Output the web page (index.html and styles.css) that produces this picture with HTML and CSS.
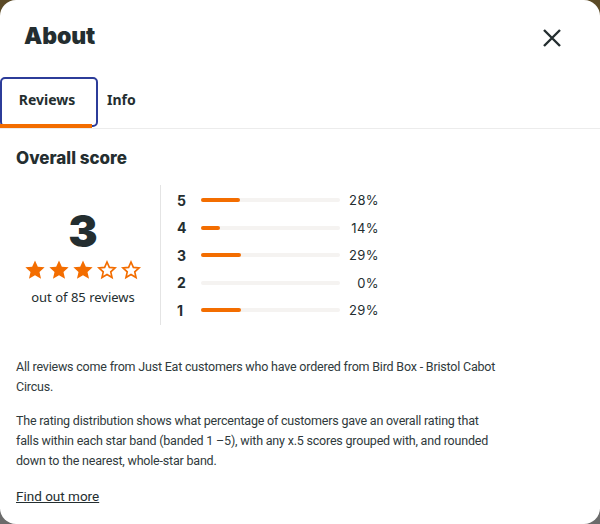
FILE: index.html
```html
<!DOCTYPE html>
<html lang="en">
<head>
<meta charset="utf-8">
<title>About</title>
<link rel="stylesheet" href="styles.css">
</head>
<body>
<div class="modal">
  <header class="head">
    <h1 class="title">About</h1>
    <button class="close" aria-label="Close">
      <svg width="20" height="20" viewBox="0 0 20 20"><path d="M2 2 L18 18 M18 2 L2 18" stroke="#242e30" stroke-width="2.4" stroke-linecap="butt" fill="none"/></svg>
    </button>
  </header>
  <nav class="tabs">
    <button class="tab active">Reviews</button>
    <button class="tab">Info</button>
  </nav>
  <section class="content">
    <h2 class="section-title">Overall score</h2>
    <div class="score">
      <div class="summary">
        <div class="big">3</div>
        <div class="stars">
          <svg class="star" viewBox="0 0 24 24"><path d="M12 1.5l3.1 6.9 7.4.7-5.6 5 1.7 7.4L12 17.6l-6.6 3.9 1.7-7.4-5.6-5 7.4-.7z" fill="#f36d00"/></svg>
          <svg class="star" viewBox="0 0 24 24"><path d="M12 1.5l3.1 6.9 7.4.7-5.6 5 1.7 7.4L12 17.6l-6.6 3.9 1.7-7.4-5.6-5 7.4-.7z" fill="#f36d00"/></svg>
          <svg class="star" viewBox="0 0 24 24"><path d="M12 1.5l3.1 6.9 7.4.7-5.6 5 1.7 7.4L12 17.6l-6.6 3.9 1.7-7.4-5.6-5 7.4-.7z" fill="#f36d00"/></svg>
          <svg class="star" viewBox="0 0 24 24"><path d="M12 3.3l2.6 5.9 6.2.6-4.7 4.2 1.4 6.2L12 16.9l-5.5 3.3 1.4-6.2-4.7-4.2 6.2-.6z" fill="none" stroke="#f36d00" stroke-width="1.8" stroke-linejoin="miter"/></svg>
          <svg class="star" viewBox="0 0 24 24"><path d="M12 3.3l2.6 5.9 6.2.6-4.7 4.2 1.4 6.2L12 16.9l-5.5 3.3 1.4-6.2-4.7-4.2 6.2-.6z" fill="none" stroke="#f36d00" stroke-width="1.8" stroke-linejoin="miter"/></svg>
        </div>
        <div class="count">out of 85 reviews</div>
      </div>
      <div class="bars">
        <div class="row"><span class="num">5</span><span class="track"><span class="fill" style="width:28%"></span></span><span class="pct">28%</span></div>
        <div class="row"><span class="num">4</span><span class="track"><span class="fill" style="width:14%"></span></span><span class="pct">14%</span></div>
        <div class="row"><span class="num">3</span><span class="track"><span class="fill" style="width:29%"></span></span><span class="pct">29%</span></div>
        <div class="row"><span class="num">2</span><span class="track"><span class="fill" style="width:0%"></span></span><span class="pct">0%</span></div>
        <div class="row"><span class="num">1</span><span class="track"><span class="fill" style="width:29%"></span></span><span class="pct">29%</span></div>
      </div>
    </div>
    <p class="text">All reviews come from Just Eat customers who have ordered from Bird Box - Bristol Cabot Circus.</p>
    <p class="text">The rating distribution shows what percentage of customers gave an overall rating that falls within each star band (banded 1 –5), with any x.5 scores grouped with, and rounded down to the nearest, whole-star band.</p>
    <a class="more" href="#">Find out more</a>
  </section>
</div>
</body>
</html>
```
FILE: styles.css
```css
* { box-sizing: border-box; }
html, body { margin: 0; padding: 0; }
body {
  width: 600px;
  height: 524px;
  overflow: hidden;
  background: linear-gradient(180deg, #5b4a26 0%, #5b4a26 40%, #6b6b6b 60%, #6b6b6b 100%);
  font-family: "Noto Sans", "Liberation Sans", sans-serif;
  color: #242e30;
}
.modal {
  width: 600px;
  height: 524px;
  background: #fff;
  border-radius: 16px;
  overflow: hidden;
}
.head {
  display: flex;
  justify-content: space-between;
  align-items: flex-start;
  padding: 22px 38px 0 24px;
  height: 77px;
}
.title {
  margin: 0;
  font-family: "Inter", sans-serif;
  font-weight: 900;
  font-size: 23px;
  line-height: 28px;
  letter-spacing: -0.1px;
  color: #242e30;
}
.close {
  border: 0;
  background: none;
  padding: 0;
  margin-top: 6px;
  width: 20px;
  height: 20px;
  cursor: pointer;
}
.close svg { display: block; }
.tabs {
  display: flex;
  align-items: flex-start;
  border-bottom: 1px solid #ececec;
  height: 52px;
}
.tab {
  border: 0;
  margin: 0;
  background: none;
  font-family: "Noto Sans", sans-serif;
  font-size: 14px;
  font-weight: 700;
  color: #242e30;
  padding: 0 12px 0 13px;
  height: 45px;
  position: relative;
}
.tab.active {
  width: 94px;
  padding: 0 14px;
}
.tab.active::before {
  content: "";
  position: absolute;
  left: 0; top: 0;
  width: 94px; height: 46px;
  border: 2px solid #2c3c99;
  border-radius: 5px;
}
.tab.active::after {
  content: "";
  position: absolute;
  left: 0; top: 47px;
  width: 92px; height: 4px;
  background: #f36d00;
}
.content { padding: 18px 16px 0; }
.section-title {
  margin: 0;
  font-family: "Inter", sans-serif;
  font-weight: 800;
  font-size: 17px;
  line-height: 22px;
  color: #242e30;
}
.score {
  display: flex;
  margin-top: 16px;
}
.summary {
  width: 144px;
  display: flex;
  flex-direction: column;
  align-items: center;
  padding: 18px 10px 0 0;
}
.big {
  font-family: "Inter", sans-serif;
  font-weight: 900;
  font-size: 44px;
  line-height: 50px;
  margin-top: 3px;
  color: #242e30;
}
.stars {
  display: flex;
  gap: 2px;
  margin-top: 3px;
}
.star { width: 22px; height: 22px; display: block; }
.count {
  font-size: 13px;
  line-height: 18px;
  margin-top: 7px;
  color: #242e30;
}
.bars {
  border-left: 1px solid #e4e4e4;
  padding: 3px 0 3px 0;
  display: flex;
  flex-direction: column;
  height: 140px;
  justify-content: space-between;
}
.row {
  display: flex;
  align-items: center;
  height: 24px;
  padding-left: 16px;
}
.num {
  width: 24px;
  font-family: "Inter", sans-serif;
  font-weight: 700;
  font-size: 14px;
  color: #242e30;
}
.track {
  width: 139px;
  height: 4px;
  border-radius: 2px;
  background: #f5f3f1;
  display: block;
}
.fill {
  display: block;
  height: 4px;
  border-radius: 2px;
  background: #f36d00;
}
.pct {
  width: 39px;
  text-align: right;
  font-family: "Inter", sans-serif;
  font-size: 13px;
  letter-spacing: 0.4px;
  color: #242e30;
}
.text {
  margin: 32px 0 0;
  max-width: 486px;
  font-family: "Roboto", "Noto Sans", sans-serif;
  font-size: 12.5px;
  letter-spacing: -0.2px;
  line-height: 20px;
  color: #303a3c;
}
.text + .text { margin-top: 14px; }
.more {
  display: inline-block;
  margin-top: 15px;
  font-family: "Roboto", "Noto Sans", sans-serif;
  font-size: 13.5px;
  line-height: 20px;
  color: #242e30;
  text-decoration: underline;
}
```
